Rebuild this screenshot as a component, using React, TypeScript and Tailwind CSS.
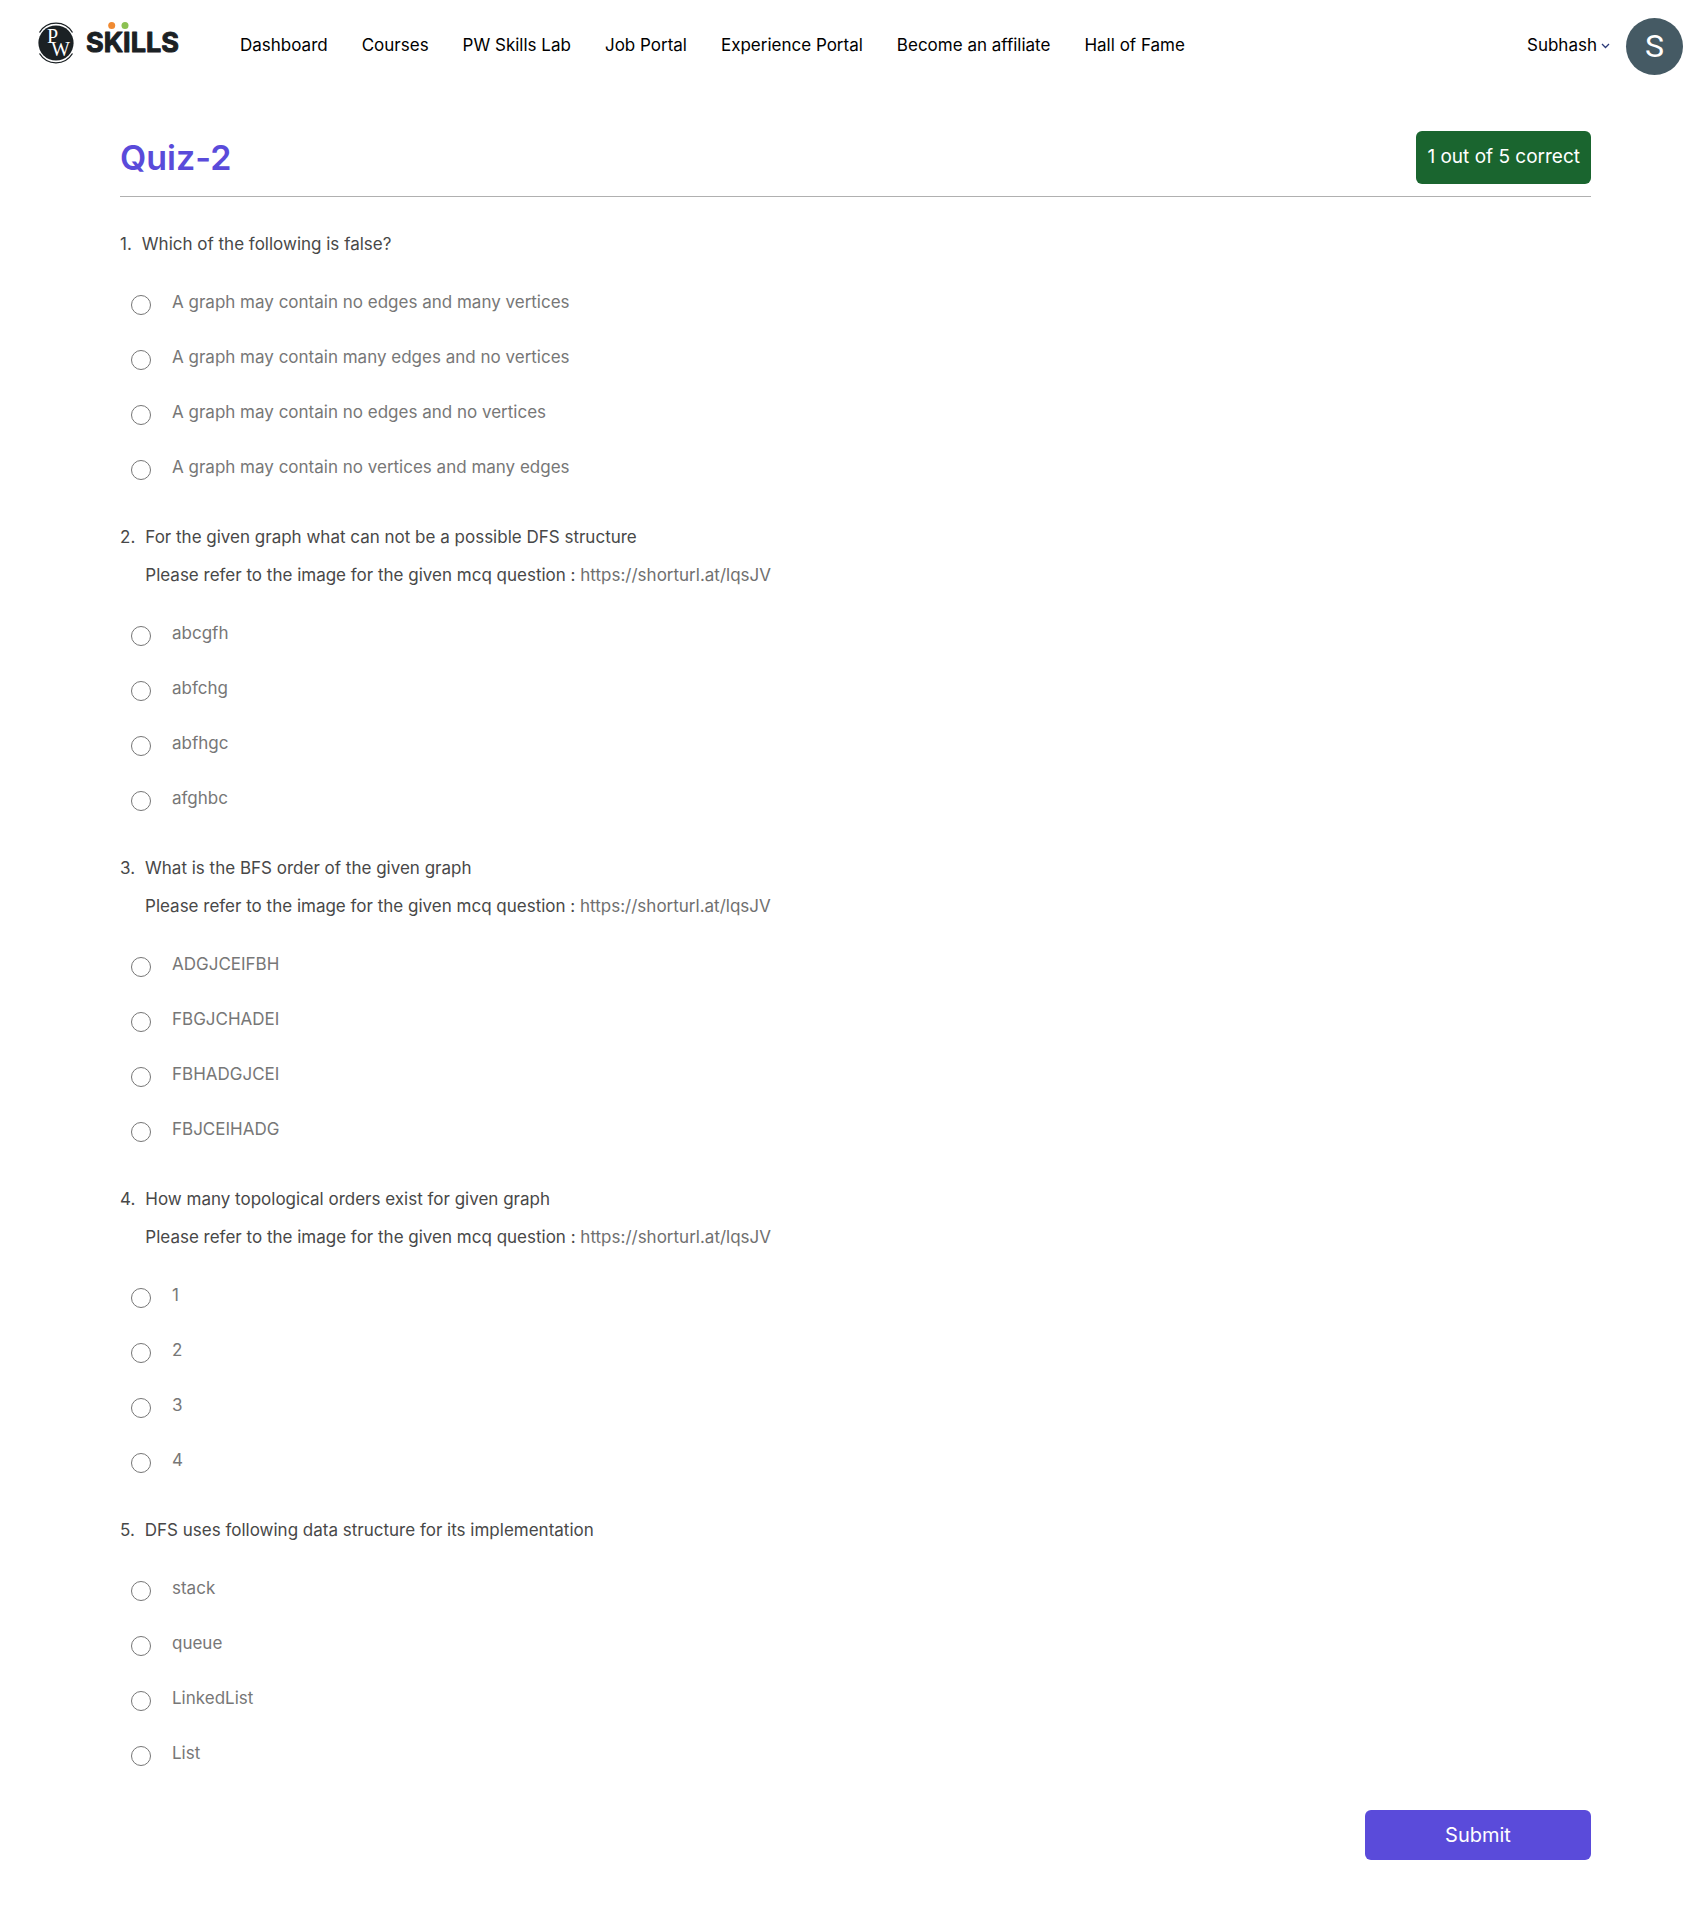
import { ReactNode } from "react";

const navItems = [
  "Dashboard",
  "Courses",
  "PW Skills Lab",
  "Job Portal",
  "Experience Portal",
  "Become an affiliate",
  "Hall of Fame",
];

type Question = { title: string; image?: string; options: string[] };

const questions: Question[] = [
  {
    title: "Which of the following is false?",
    options: [
      "A graph may contain no edges and many vertices",
      "A graph may contain many edges and no vertices",
      "A graph may contain no edges and no vertices",
      "A graph may contain no vertices and many edges",
    ],
  },
  {
    title: "For the given graph what can not be a possible DFS structure",
    image: "https://shorturl.at/lqsJV",
    options: ["abcgfh", "abfchg", "abfhgc", "afghbc"],
  },
  {
    title: "What is the BFS order of the given graph",
    image: "https://shorturl.at/lqsJV",
    options: ["ADGJCEIFBH", "FBGJCHADEI", "FBHADGJCEI", "FBJCEIHADG"],
  },
  {
    title: "How many topological orders exist for given graph",
    image: "https://shorturl.at/lqsJV",
    options: ["1", "2", "3", "4"],
  },
  {
    title: "DFS uses following data structure for its implementation",
    options: ["stack", "queue", "LinkedList", "List"],
  },
];

function Logo() {
  return (
    <svg width="148" height="48" viewBox="0 0 148 48" role="img" aria-label="PW Skills">
      <circle cx="20" cy="25" r="17.6" fill="#1b2124" />
      <path
        d="M3.5 14.5A19.3 19.3 0 0 1 36.5 14.5M3.5 35.5A19.3 19.3 0 0 0 36.5 35.5"
        fill="none"
        stroke="#1b2124"
        strokeWidth="1.3"
      />
      <text fontFamily="Liberation Serif, serif" fontSize="20" fill="#fff">
        <tspan x="11" y="25">P</tspan>
        <tspan x="15" y="38">W</tspan>
      </text>
      <text
        x="50"
        y="34"
        fontFamily="Inter, sans-serif"
        fontWeight="700"
        fontSize="27"
        fill="#1b2124"
        stroke="#1b2124"
        strokeWidth="1"
        strokeLinejoin="round"
      >
        SKILLS
      </text>
      <circle cx="75.7" cy="7.5" r="3.5" fill="#f08a32" />
      <circle cx="89" cy="7.5" r="3.5" fill="#8cc152" />
    </svg>
  );
}

function Header() {
  return (
    <header className="flex h-[92px] items-center pr-[17px] pl-9 text-[17px] text-black">
      <a href="#" className="-mt-2 shrink-0">
        <Logo />
      </a>
      <nav className="ml-14 flex gap-[34px]">
        {navItems.map((item) => (
          <a key={item} href="#" className="whitespace-nowrap">
            {item}
          </a>
        ))}
      </nav>
      <button type="button" className="ml-auto flex items-center gap-4">
        <span className="flex items-center gap-1">
          Subhash
          <svg width="9" height="6" viewBox="0 0 9 6" fill="none" stroke="#2b3a78" strokeWidth="1.3" aria-hidden="true">
            <path d="M1 1L4.5 4.5L8 1" />
          </svg>
        </span>
        <span className="flex size-[57px] items-center justify-center rounded-full bg-[#455a64] font-[Roboto] text-[32px] text-white">
          S
        </span>
      </button>
    </header>
  );
}

function Option({ name, children }: { name: string; children: ReactNode }) {
  return (
    <label className="flex h-[55px] items-center gap-[21px] pl-[11px] text-[17px] text-[#777]">
      <input
        type="radio"
        name={name}
        className="size-5 shrink-0 appearance-none rounded-full border border-[#767676] bg-white checked:border-[6px] checked:border-[#5a4bda]"
      />
      <span className="pb-1">{children}</span>
    </label>
  );
}

export default function App() {
  return (
    <div className="min-h-screen bg-white font-[Inter,sans-serif]">
      <Header />
      <main className="mr-[109px] ml-[120px] pt-[39px] pb-14">
        <div className="flex items-center justify-between border-b border-[#b0b0b0] pb-3">
          <h1 className="text-[34px] leading-[48px] font-semibold text-[#5a4bda]">Quiz-2</h1>
          <p className="flex h-[53px] items-center rounded-md bg-[#1a652f] px-[11px] text-[19px] text-white">
            1 out of 5 correct
          </p>
        </div>
        <form className="pt-7" onSubmit={(e) => e.preventDefault()}>
          {questions.map((q, i) => (
            <fieldset key={q.title} className="mb-[21px]">
              <legend className="mb-3.5 flex gap-2.5 text-[17px] leading-[38px] text-[#484848]">
                <span>{i + 1}.</span>
                <div>
                  <p>{q.title}</p>
                  {q.image && (
                    <p>
                      Please refer to the image for the given mcq question :{" "}
                      <a href={q.image} className="text-[#707070]">
                        {q.image}
                      </a>
                    </p>
                  )}
                </div>
              </legend>
              {q.options.map((o) => (
                <Option key={o} name={"question-" + (i + 1)}>
                  {o}
                </Option>
              ))}
            </fieldset>
          ))}
          <div className="flex justify-end pt-1.5">
            <button type="submit" className="h-[50px] w-[226px] rounded-md bg-[#5a4bda] text-[20px] text-white">
              Submit
            </button>
          </div>
        </form>
      </main>
    </div>
  );
}
